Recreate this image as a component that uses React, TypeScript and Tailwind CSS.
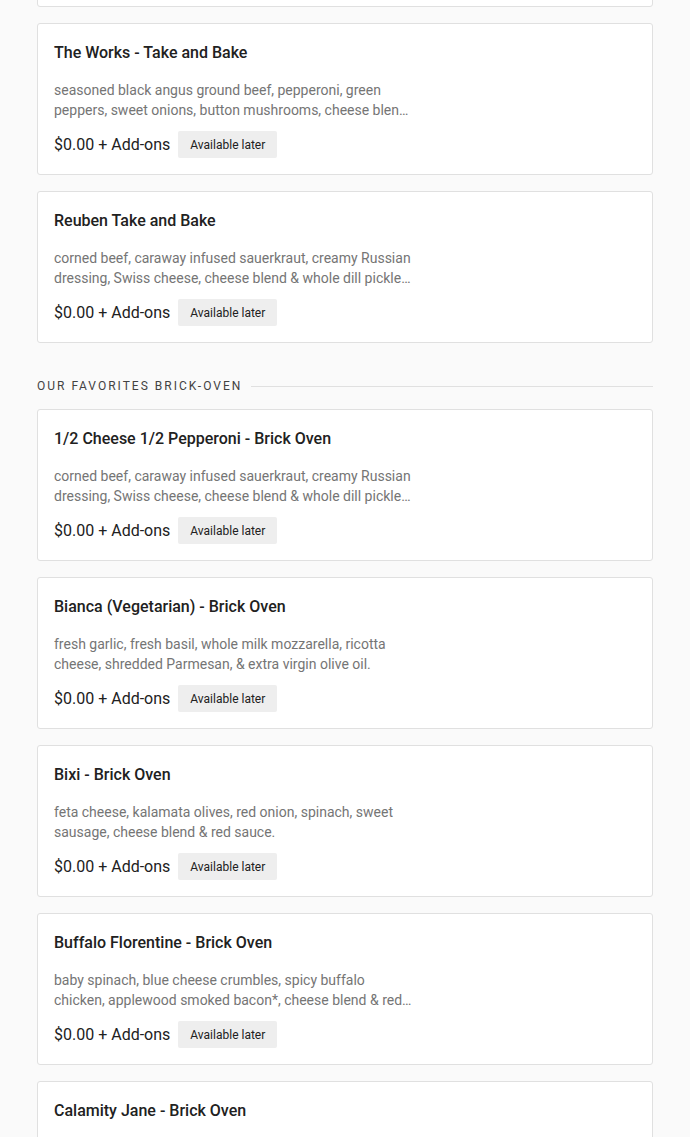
import React from "react";

type Item = { name: string; desc: string };

const takeAndBake: Item[] = [
  { name: "Hidden", desc: "placeholder, placeholder" },
  {
    name: "The Works - Take and Bake",
    desc: "seasoned black angus ground beef, pepperoni, green peppers, sweet onions, button mushrooms, cheese blend & red sauce.",
  },
  {
    name: "Reuben Take and Bake",
    desc: "corned beef, caraway infused sauerkraut, creamy Russian dressing, Swiss cheese, cheese blend & whole dill pickle slices.",
  },
];

const brickOven: Item[] = [
  {
    name: "1/2 Cheese 1/2 Pepperoni - Brick Oven",
    desc: "corned beef, caraway infused sauerkraut, creamy Russian dressing, Swiss cheese, cheese blend & whole dill pickle slices.",
  },
  {
    name: "Bianca (Vegetarian) - Brick Oven",
    desc: "fresh garlic, fresh basil, whole milk mozzarella, ricotta cheese, shredded Parmesan, & extra virgin olive oil.",
  },
  {
    name: "Bixi - Brick Oven",
    desc: "feta cheese, kalamata olives, red onion, spinach, sweet sausage, cheese blend & red sauce.",
  },
  {
    name: "Buffalo Florentine - Brick Oven",
    desc: "baby spinach, blue cheese crumbles, spicy buffalo chicken, applewood smoked bacon*, cheese blend & red onion.",
  },
  {
    name: "Calamity Jane - Brick Oven",
    desc: "grilled chicken, bacon, ranch, cheese blend & red onion.",
  },
];

function MenuCard({ item }: { item: Item }) {
  return (
    <div className="bg-white border border-[#e0e0e0] rounded-[3px] h-[152px] px-4 pt-[17px]">
      <h3 className="text-[16px] leading-6 font-medium text-[#212121]">{item.name}</h3>
      <p className="mt-[15px] w-[360px] text-[14px] leading-5 text-[#757575] line-clamp-2">
        {item.desc}
      </p>
      <div className="mt-[11px] flex items-center gap-2">
        <span className="text-[16px] leading-6 text-[#212121]">$0.00 + Add-ons</span>
        <span className="bg-[#eeeeee] rounded-[2px] h-[27px] px-3 flex items-center text-[12px] text-[#212121]">
          Available later
        </span>
      </div>
    </div>
  );
}

export default function App() {
  return (
    <div
      className="bg-[#fafafa] overflow-hidden h-[1137px]"
      style={{ fontFamily: "Roboto, 'Noto Sans', sans-serif" }}
    >
      {/* first card is scrolled mostly out of view */}
      <div className="mx-[37px] -mt-[145px] flex flex-col gap-4">
        {takeAndBake.map((item) => (
          <MenuCard key={item.name} item={item} />
        ))}
      </div>

      <div className="mx-[37px] mt-[35px] mb-[15px] flex items-center gap-[9px]">
        <h2 className="text-[12px] leading-4 tracking-[2px] text-[#424242] uppercase whitespace-nowrap">
          Our Favorites Brick-Oven
        </h2>
        <div className="flex-1 h-px bg-[#e0e0e0]" />
      </div>

      <div className="mx-[37px] flex flex-col gap-4">
        {brickOven.map((item) => (
          <MenuCard key={item.name} item={item} />
        ))}
      </div>
    </div>
  );
}
